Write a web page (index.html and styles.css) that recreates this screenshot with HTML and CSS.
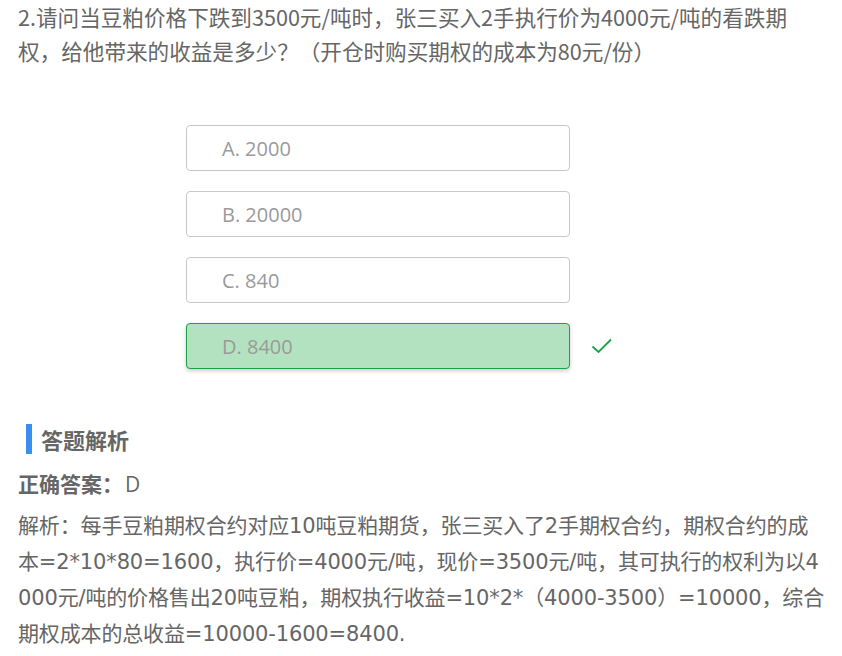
FILE: index.html
```html
<!DOCTYPE html>
<html lang="zh">
<head>
<meta charset="utf-8">
<link rel="stylesheet" href="styles.css">
</head>
<body>
<div class="page">
  <p class="question">2.请问当豆粕价格下跌到3500元/吨时，张三买入2手执行价为4000元/吨的看跌期权，给他带来的收益是多少？（开仓时购买期权的成本为80元/份）</p>
  <div class="options">
    <div class="option-row"><div class="option">A. 2000</div></div>
    <div class="option-row"><div class="option">B. 20000</div></div>
    <div class="option-row"><div class="option">C. 840</div></div>
    <div class="option-row"><div class="option correct">D. 8400</div>
      <svg class="check" width="22" height="18" viewBox="0 0 22 18"><path d="M1.5 9.5 L7.5 15 L20 2.5" fill="none" stroke="#1aa14a" stroke-width="1.8"/></svg>
    </div>
  </div>
  <div class="section-title"><span class="bar"></span><span>答题解析</span></div>
  <div class="answer"><b>正确答案：</b><span class="letter">D</span></div>
  <p class="analysis">解析：每手豆粕期权合约对应10吨豆粕期货，张三买入了2手期权合约，期权合约的成<br>本=2*10*80=1600，执行价=4000元/吨，现价=3500元/吨，其可执行的权利为以4<br>000元/吨的价格售出20吨豆粕，期权执行收益=10*2*（4000-3500）=10000，综合<br>期权成本的总收益=10000-1600=8400.</p>
</div>
</body>
</html>
```
FILE: styles.css
```css
html, body { margin: 0; padding: 0; background: #fff; }
body {
  font-family: "Noto Sans CJK SC", "Noto Sans", sans-serif;
  color: #666;
}
.page { padding: 0 18px; width: 806px; }
.question {
  margin: 0;
  font-size: 21.6px;
  line-height: 34px;
  word-break: break-all;
}
.options {
  margin: 57px 0 0 168px;
  display: flex;
  flex-direction: column;
  gap: 20px;
}
.option-row { display: flex; align-items: center; }
.option {
  box-sizing: border-box;
  width: 384px;
  height: 46px;
  border: 1px solid #c8c8c8;
  border-radius: 4px;
  padding-left: 35px;
  display: flex;
  align-items: center;
  font-family: "Open Sans", "Noto Sans", sans-serif;
  font-size: 20px;
  color: #9a9a9a;
}
.option.correct {
  background: #b3e2c1;
  border-color: #1aa14a;
  box-shadow: 0 2px 4px rgba(0,0,0,0.2);
}
.check { margin-left: 21px; }
.section-title {
  margin: 54px 0 0 8px;
  display: flex;
  align-items: center;
  font-size: 22px;
  font-weight: bold;
  color: #666;
}
.bar { width: 6px; height: 30px; background: #3a8ef0; margin-right: 9px; }
.answer {
  margin-top: 11px;
  font-size: 21px;
  line-height: 34px;
}
.answer b { font-weight: bold; }
.letter { font-family: "Open Sans", sans-serif; font-size: 21px; margin-left: 2px; }
.analysis {
  margin: 7px -18px 0 0;
  font-family: "DejaVu Sans", "Noto Sans CJK SC", sans-serif;
  font-size: 21px;
  line-height: 36px;
  letter-spacing: -0.15px;
  white-space: nowrap;
}
```
